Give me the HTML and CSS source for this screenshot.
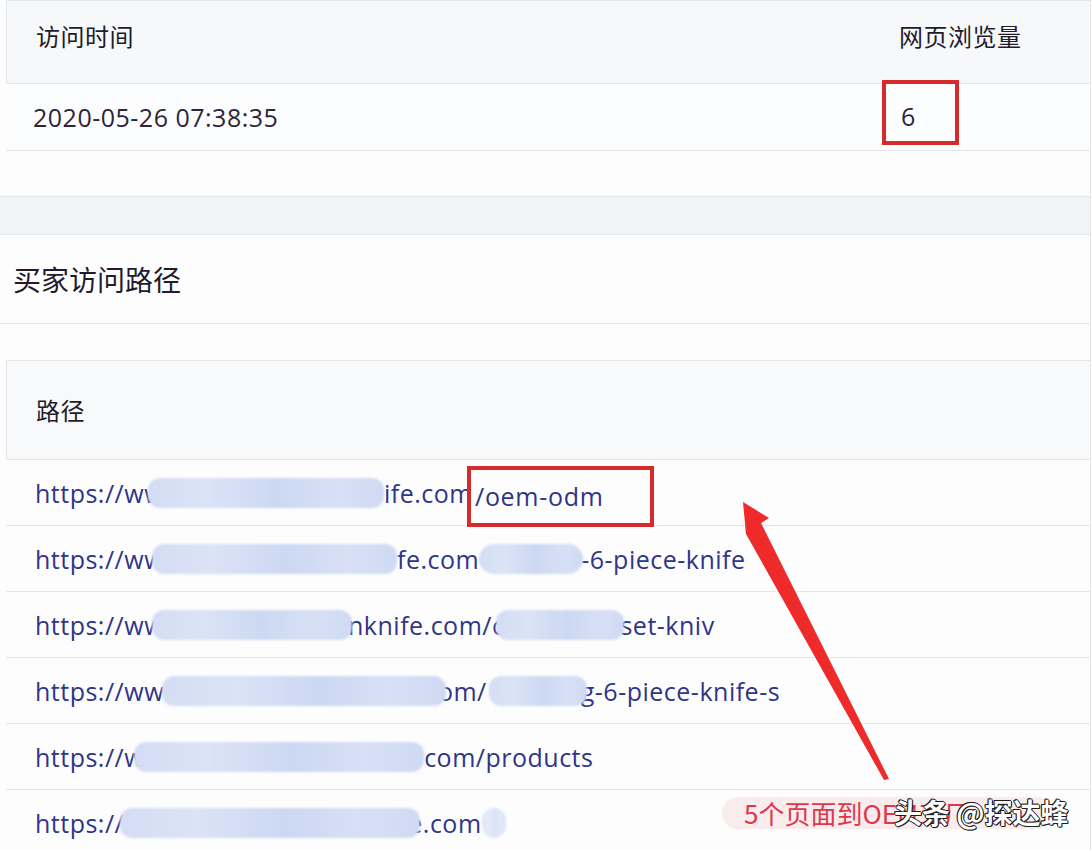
FILE: index.html
```
<!DOCTYPE html>
<html>
	<head>
		<title>买家访问路径</title>
		<link rel="stylesheet" href="styles.css">
	</head>
	<body>
		<div class="page">
			<div class="visit">
				<div class="visitHead">
					<span class="cellText">访问时间</span>
					<span class="cellText">网页浏览量</span>
				</div>
				<div class="visitRow">
					<span class="date">2020-05-26 07:38:35</span>
					<span class="cell"><span class="markBox countBox">6</span></span>
				</div>
				<div class="visitFoot"></div>
			</div>

			<div class="band"></div>

			<div class="pathTitle">买家访问路径</div>
			<div class="gap"></div>

			<div class="pathTable">
				<div class="pathHead">路径</div>
				<div class="pathRow">
					<span class="url">https://ww</span><span class="blur b1a"></span><span class="url">ife.com</span><span class="markBox pathBox">/oem-odm</span>
				</div>
				<div class="pathRow">
					<span class="url">https://ww</span><span class="blur b2a"></span><span class="url">fe.com</span><span class="blur b2b"></span><span class="url">-6-piece-knife</span>
				</div>
				<div class="pathRow">
					<span class="url">https://ww</span><span class="blur b3a"></span><span class="url">nknife.com/c</span><span class="blur b3b"></span><span class="url">set-kniv</span>
				</div>
				<div class="pathRow">
					<span class="url">https://www</span><span class="blur b4a"></span><span class="url">om/</span><span class="blur b4b"></span><span class="url">g-6-piece-knife-s</span>
				</div>
				<div class="pathRow">
					<span class="url">https://w</span><span class="blur b5a"></span><span class="url">com/products</span>
				</div>
				<div class="pathRow lastRow">
					<span class="url">https://</span><span class="blur b6a"></span><span class="url">e.com</span><span class="blur b6b"></span>
				</div>
			</div>

			<svg class="arrow" width="1092" height="850" viewBox="0 0 1092 850">
				<polygon points="743,502 769,518 761,523 889,779 884,780 746,534" fill="#ee2a2a"/>
			</svg>

			<div class="caption"><span class="captionText">5个页面到OEM工厂</span></div>
			<div class="watermark">头条 @探达蜂</div>
		</div>
	</body>
</html>
```

FILE: styles.css
```
* {
	box-sizing: border-box;
}

body {
	margin: 0;
	background-color: #fdfdfe;
	font-family: "Open Sans", "Noto Sans CJK SC", sans-serif;
	color: #2a2333;
}

.page {
	position: relative;
	width: 1091px;
	height: 850px;
	overflow: hidden;
	border-right: 1px solid #e3e6eb;
	background-color: #fdfdfe;
}

/* top table */
.visit {
	padding-left: 6px;
}

.visitHead {
	display: grid;
	grid-template-columns: 1fr 191px;
	height: 84px;
	padding-top: 19px;
	border: 1px solid #e2e6eb;
	border-right: none;
	background-color: #f7f8fa;
}

.cellText {
	font-family: "Noto Sans CJK SC", sans-serif;
	font-size: 24px;
	line-height: 32px;
	letter-spacing: 0.5px;
	color: #221b2c;
}

.visitHead .cellText:first-child {
	padding-left: 29px;
}

.visitRow {
	display: grid;
	grid-template-columns: 1fr 191px;
	align-items: center;
	height: 67px;
	border-bottom: 1px solid #e2e6eb;
	background-color: #fcfdfe;
}

.date {
	padding-left: 27px;
	font-size: 25px;
	letter-spacing: 0.5px;
	color: #2d2538;
}

.cell {
	align-self: start;
}

.markBox {
	display: inline-block;
	border: 4px solid #d62b2b;
}

.countBox {
	width: 77px;
	height: 65px;
	margin-top: -4px;
	margin-left: -17px;
	padding: 17px 0 0 15px;
	font-size: 25px;
	line-height: 30px;
	color: #2d2538;
}

.visitFoot {
	height: 45px;
}

.band {
	height: 39px;
	border-top: 1px solid #e2e6eb;
	border-bottom: 1px solid #e2e6eb;
	background-color: #f2f3f5;
}

.pathTitle {
	height: 89px;
	padding-left: 13px;
	border-bottom: 1px solid #e2e6eb;
	font-family: "Noto Sans CJK SC", sans-serif;
	font-size: 28px;
	line-height: 88px;
	color: #221b2c;
}

.gap {
	height: 36px;
}

/* path table */
.pathTable {
	padding-left: 6px;
}

.pathHead {
	height: 100px;
	padding-left: 29px;
	border: 1px solid #e2e6eb;
	border-right: none;
	background-color: #f8f9fb;
	font-family: "Noto Sans CJK SC", sans-serif;
	font-size: 24px;
	line-height: 98px;
	letter-spacing: 0.5px;
	color: #221b2c;
}

.pathRow {
	display: flex;
	align-items: center;
	height: 66px;
	padding-left: 29px;
	border-bottom: 1px solid #e2e6eb;
	white-space: nowrap;
}

.lastRow {
	border-bottom: none;
}

.url {
	font-size: 25px;
	letter-spacing: 0.5px;
	color: #2f3587;
}

.pathBox {
	height: 61px;
	margin-top: 8px;
	margin-left: -6px;
	padding: 0 46px 0 4px;
	font-size: 25px;
	line-height: 52px;
	letter-spacing: 0.7px;
	color: #2f3587;
}

/* redacted parts */
.blur {
	position: relative;
	z-index: 1;
	display: inline-block;
	height: 30px;
	border-radius: 12px;
	background: linear-gradient(90deg, #d4ddf4, #dbe3f6 25%, #ccd8f2 55%, #d7e0f5 80%, #cfdaf3);
	filter: blur(1.3px);
}

.b1a { width: 236px; margin-left: -16px; }
.b2a { width: 245px; margin-left: -12px; }
.b2b { width: 104px; margin-right: -2px; border-radius: 16px; }
.b3a { width: 200px; margin-left: -12px; margin-right: -4px; }
.b3b { width: 128px; margin-left: -8px; margin-right: -4px; }
.b4a { width: 284px; margin-left: -22px; margin-right: -8px; }
.b4b { width: 98px; margin-left: 2px; margin-right: -6px; }
.b5a { width: 290px; margin-left: -10px; }
.b6a { width: 300px; margin-left: -4px; margin-right: -12px; }
.b6b { width: 24px; opacity: 0.7; }

/* annotations */
.arrow {
	position: absolute;
	top: 0;
	left: 0;
	pointer-events: none;
}

.caption {
	position: absolute;
	left: 722px;
	top: 797px;
	width: 332px;
	height: 32px;
	padding-left: 22px;
	border-radius: 16px;
	background-color: rgba(246, 214, 218, 0.45);
}

.captionText {
	font-family: "Noto Sans CJK SC", sans-serif;
	font-size: 26px;
	line-height: 32px;
	color: #e0364a;
	white-space: nowrap;
}

.watermark {
	position: absolute;
	left: 894px;
	top: 795px;
	font-family: "Noto Sans CJK SC", sans-serif;
	font-size: 28px;
	font-weight: 700;
	line-height: 34px;
	color: #ffffff;
	white-space: nowrap;
	text-shadow: 1px 0 #1e1e1e, -1px 0 #1e1e1e, 0 1px #1e1e1e, 0 -1px #1e1e1e, 1px 1px #1e1e1e, -1px -1px #1e1e1e;
}
```
